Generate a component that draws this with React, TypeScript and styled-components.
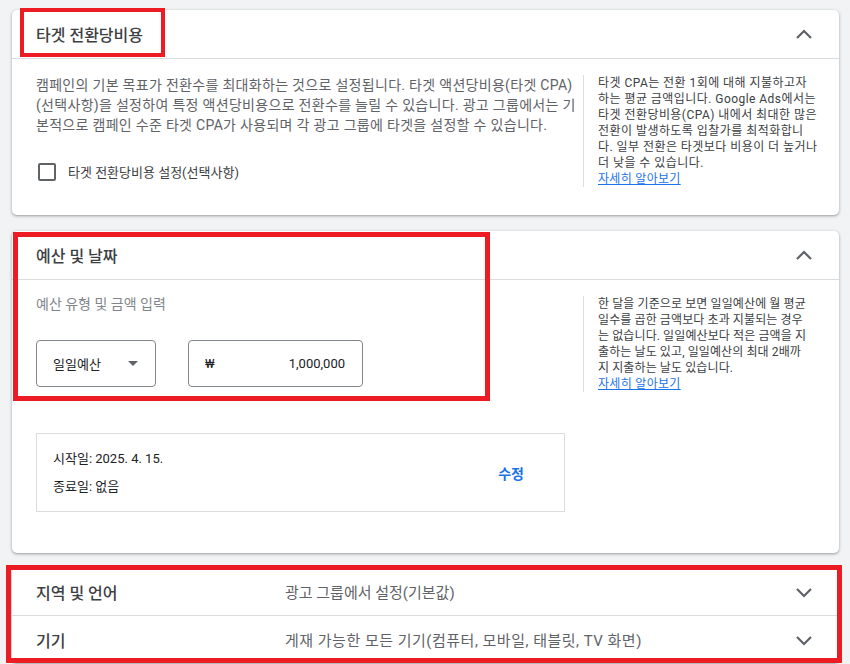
import React from 'react';
import styled, { createGlobalStyle } from 'styled-components';

const GlobalStyle = createGlobalStyle`
  html, body {
    margin: 0;
    padding: 0;
    background: #f1f3f4;
    font-family: Roboto, 'Noto Sans CJK KR', sans-serif;
    color: #3c4043;
  }
`;

const Page = styled.div`
  display: flex;
  flex-direction: column;
  gap: 16px;
  padding: 10px 11px 0 12px;
  height: 664px;
  box-sizing: border-box;
  overflow: hidden;
`;

const Card = styled.section<{ $pull?: number }>`
  position: relative;
  background: #fff;
  border-radius: 5px;
  box-shadow: 0 1px 2px rgba(60, 64, 67, 0.3), 0 1px 3px 1px rgba(60, 64, 67, 0.15);
  flex-shrink: 0;
  margin-top: ${(p) => (p.$pull ? -p.$pull : 0)}px;
`;

const CardHeader = styled.div`
  display: flex;
  align-items: center;
  justify-content: space-between;
  height: 48px;
  padding: 0 23px 0 24px;
  border-bottom: 1px solid #dadce0;
`;

const Title = styled.h2`
  margin: 0;
  font-size: 16px;
  font-weight: 500;
  color: #3c4043;
`;

const CardBody = styled.div<{ $bottom: number }>`
  padding: 16px 24px ${(p) => p.$bottom}px 24px;
`;

const Columns = styled.div`
  display: grid;
  grid-template-columns: 535px 232px;
  column-gap: 12px;
  align-items: start;
`;

const MainText = styled.div`
  font-size: 14px;
  line-height: 20px;
  letter-spacing: 0.3px;
  color: #5f6368;
`;

const Line = styled.div`
  white-space: nowrap;
`;

const HelpColumn = styled.aside<{ $spacing: number }>`
  border-left: 1px solid #dadce0;
  padding-left: 14px;
  font-size: 12px;
  line-height: 16px;
  letter-spacing: ${(p) => p.$spacing}px;
  color: #3c4043;
`;

const HelpLink = styled.a`
  color: #1a73e8;
  text-decoration: underline;
  display: block;
  letter-spacing: 0.3px;
`;

const CheckRow = styled.label`
  display: flex;
  align-items: center;
  gap: 12px;
  margin-top: 27px;
  margin-left: 2px;
  font-size: 13px;
  color: #3c4043;
`;

const Box = styled.span`
  width: 18px;
  height: 18px;
  box-sizing: border-box;
  border: 2px solid #5f6368;
  border-radius: 2px;
`;

const FieldLabel = styled.div`
  font-size: 14px;
  line-height: 16px;
  color: #80868b;
`;

const Fields = styled.div`
  display: flex;
  gap: 32px;
  margin-top: 28px;
`;

const Field = styled.div<{ $width: number }>`
  display: flex;
  align-items: center;
  justify-content: space-between;
  width: ${(p) => p.$width}px;
  height: 47px;
  box-sizing: border-box;
  padding: 0 17px 0 16px;
  border: 1px solid #80868b;
  border-radius: 4px;
  font-size: 13px;
  color: #202124;
`;

const Caret = styled.span`
  width: 0;
  height: 0;
  border-left: 5px solid transparent;
  border-right: 5px solid transparent;
  border-top: 5px solid #5f6368;
`;

const DateBox = styled.div`
  display: flex;
  align-items: center;
  justify-content: space-between;
  width: 529px;
  height: 79px;
  margin-top: 41px;
  box-sizing: border-box;
  padding: 0 40px 0 16px;
  border: 1px solid #dadce0;
`;

const DateLines = styled.div`
  display: flex;
  flex-direction: column;
  gap: 12px;
  font-size: 13px;
  line-height: 16px;
  color: #202124;
`;

const EditButton = styled.button`
  border: none;
  background: none;
  padding: 0;
  font-family: inherit;
  font-size: 14px;
  font-weight: 700;
  color: #1a73e8;
`;

const SummaryRow = styled.div<{ $last?: boolean }>`
  display: grid;
  grid-template-columns: 249px 1fr 24px;
  align-items: center;
  height: 47px;
  padding: 0 23px 0 24px;
  border-bottom: ${(p) => (p.$last ? 'none' : '1px solid #dadce0')};
`;

const RowLabel = styled.div`
  font-size: 16px;
  font-weight: 500;
  color: #3c4043;
`;

const RowValue = styled.div<{ $spacing?: number }>`
  font-size: 15px;
  letter-spacing: ${(p) => p.$spacing ?? 0}px;
  color: #5f6368;
`;

const Mark = styled.div<{ $l: number; $t: number; $w: number; $h: number; $b: number }>`
  position: absolute;
  left: ${(p) => p.$l}px;
  top: ${(p) => p.$t}px;
  width: ${(p) => p.$w}px;
  height: ${(p) => p.$h}px;
  box-sizing: border-box;
  border: ${(p) => p.$b}px solid #ed1c24;
  pointer-events: none;
`;

function Chevron({ up }: { up?: boolean }) {
  return (
    <svg width="24" height="24" viewBox="0 0 24 24">
      <polyline
        points={up ? '5,16 12,9 19,16' : '5,9 12,16 19,9'}
        fill="none"
        stroke="#5f6368"
        strokeWidth="2.2"
      />
    </svg>
  );
}

const mainLines = [
  '캠페인의 기본 목표가 전환수를 최대화하는 것으로 설정됩니다. 타겟 액션당비용(타겟 CPA)',
  '(선택사항)을 설정하여 특정 액션당비용으로 전환수를 늘릴 수 있습니다. 광고 그룹에서는 기',
  '본적으로 캠페인 수준 타겟 CPA가 사용되며 각 광고 그룹에 타겟을 설정할 수 있습니다.',
];

const cpaHelp = [
  '타겟 CPA는 전환 1회에 대해 지불하고자',
  '하는 평균 금액입니다. Google Ads에서는',
  '타겟 전환당비용(CPA) 내에서 최대한 많은',
  '전환이 발생하도록 입찰가를 최적화합니',
  '다. 일부 전환은 타겟보다 비용이 더 높거나',
  '더 낮을 수 있습니다.',
];

const budgetHelp = [
  '한 달을 기준으로 보면 일일예산에 월 평균',
  '일수를 곱한 금액보다 초과 지불되는 경우',
  '는 없습니다. 일일예산보다 적은 금액을 지',
  '출하는 날도 있고, 일일예산의 최대 2배까',
  '지 지출하는 날도 있습니다.',
];

export default function App() {
  return (
    <>
      <GlobalStyle />
      <Page>
        <Card>
          <CardHeader>
            <Title>타겟 전환당비용</Title>
            <Chevron up />
          </CardHeader>
          <CardBody $bottom={28}>
            <Columns>
              <div>
                <MainText>
                  {mainLines.map((l) => (
                    <Line key={l}>{l}</Line>
                  ))}
                </MainText>
                <CheckRow>
                  <Box />
                  타겟 전환당비용 설정(선택사항)
                </CheckRow>
              </div>
              <HelpColumn $spacing={0.45}>
                {cpaHelp.map((l) => (
                  <Line key={l}>{l}</Line>
                ))}
                <HelpLink href="#">자세히 알아보기</HelpLink>
              </HelpColumn>
            </Columns>
          </CardBody>
          <Mark $l={8} $t={-2} $w={145} $h={49} $b={4} />
        </Card>

        <Card>
          <CardHeader>
            <Title>예산 및 날짜</Title>
            <Chevron up />
          </CardHeader>
          <CardBody $bottom={41}>
            <Columns>
              <div>
                <FieldLabel>예산 유형 및 금액 입력</FieldLabel>
                <Fields>
                  <Field $width={120}>
                    일일예산
                    <Caret />
                  </Field>
                  <Field $width={175}>
                    <span>₩</span>
                    <span>1,000,000</span>
                  </Field>
                </Fields>
              </div>
              <HelpColumn $spacing={0.1}>
                {budgetHelp.map((l) => (
                  <Line key={l}>{l}</Line>
                ))}
                <HelpLink href="#">자세히 알아보기</HelpLink>
              </HelpColumn>
            </Columns>
            <DateBox>
              <DateLines>
                <div>시작일: 2025. 4. 15.</div>
                <div>종료일: 없음</div>
              </DateLines>
              <EditButton>수정</EditButton>
            </DateBox>
          </CardBody>
          <Mark $l={1} $t={1} $w={477} $h={169} $b={5} />
        </Card>

        <Card $pull={1}>
          <SummaryRow>
            <RowLabel>지역 및 언어</RowLabel>
            <RowValue>광고 그룹에서 설정(기본값)</RowValue>
            <Chevron />
          </SummaryRow>
          <SummaryRow $last>
            <RowLabel>기기</RowLabel>
            <RowValue $spacing={0.5}>게재 가능한 모든 기기(컴퓨터, 모바일, 태블릿, TV 화면)</RowValue>
            <Chevron />
          </SummaryRow>
          <Mark $l={-6} $t={-3} $w={836} $h={98} $b={5} />
        </Card>
      </Page>
    </>
  );
}
